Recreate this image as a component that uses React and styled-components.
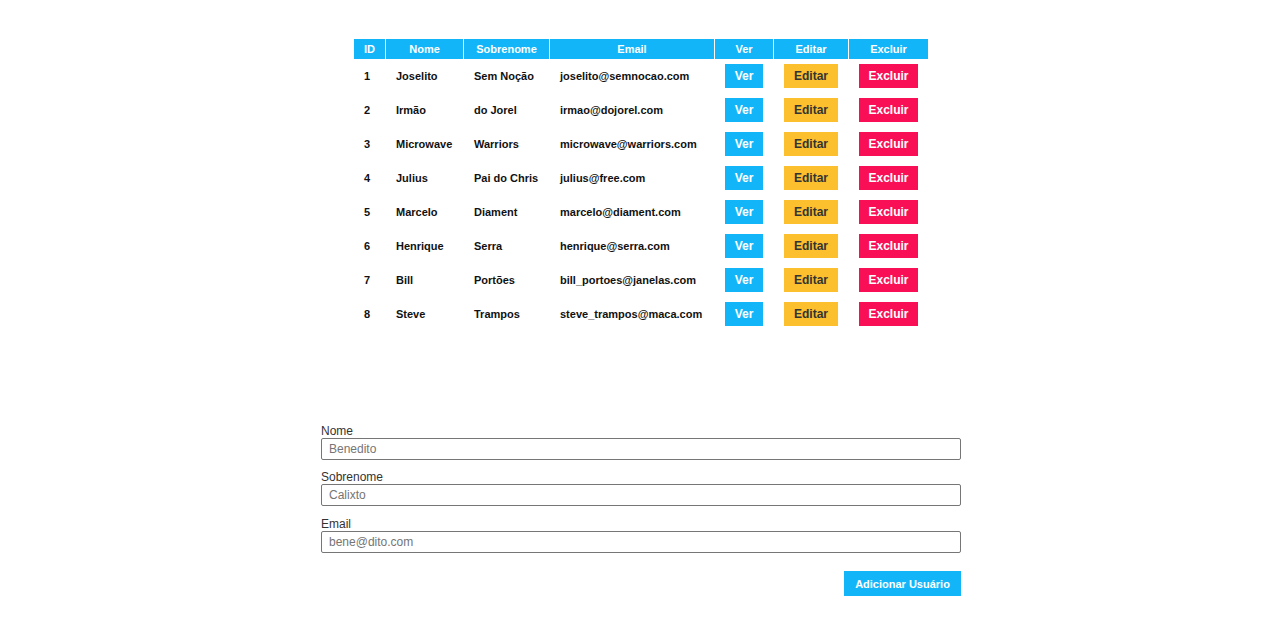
import React from "react";
import styled, { createGlobalStyle } from "styled-components";

const GlobalStyle = createGlobalStyle`
  html, body { margin: 0; padding: 0; background: #fff; }
  body { font-family: "Liberation Sans", Arial, sans-serif; }
`;

const BLUE = "#12b6f8";
const YELLOW = "#fcc02e";
const RED = "#f90f56";

const Page = styled.div`
  padding: 38px 0 0 2px;
  display: flex;
  flex-direction: column;
  align-items: center;
`;

const Table = styled.table`
  border-collapse: separate;
  border-spacing: 1px;
  font-family: "Liberation Sans", Arial, sans-serif;
  font-size: 11px;
  font-weight: bold;
`;

const Th = styled.th`
  background: ${BLUE};
  color: #fff;
  height: 20px;
  padding: 0 10px;
  min-width: ${(p) => p.$w}px;
  text-align: center;
  font-weight: bold;
  white-space: nowrap;
`;

const Td = styled.td`
  padding: 4px 10px 5px;
  color: #111;
  text-align: left;
  vertical-align: middle;
  white-space: nowrap;
`;

const ActionButton = styled.button`
  height: 24px;
  width: ${(p) => p.$w}px;
  border: none;
  border-radius: 0;
  padding: 0;
  font-family: "Liberation Sans", Arial, sans-serif;
  font-size: 12px;
  font-weight: bold;
  cursor: pointer;
  background: ${(p) => p.$bg};
  color: ${(p) => p.$fg};
  display: block;
`;

const Form = styled.form`
  width: 640px;
  margin-top: 92px;
  display: flex;
  flex-direction: column;
`;

const Field = styled.div`
  display: flex;
  flex-direction: column;
  margin-bottom: ${(p) => p.$mb}px;
`;

const Label = styled.label`
  font-size: 12px;
  line-height: 14px;
  color: #333;
`;

const Input = styled.input`
  box-sizing: border-box;
  width: 640px;
  height: 22px;
  border: 1px solid #767676;
  border-radius: 2px;
  padding: 0 7px;
  font-family: "Liberation Sans", Arial, sans-serif;
  font-size: 12px;
  color: #333;
  &::placeholder { color: #757575; }
`;

const SubmitRow = styled.div`
  display: flex;
  justify-content: flex-end;
  margin-top: 8px;
`;

const SubmitButton = styled.button`
  height: 25px;
  width: 117px;
  border: none;
  padding: 0;
  background: ${BLUE};
  color: #fff;
  font-family: "Liberation Sans", Arial, sans-serif;
  font-size: 11px;
  font-weight: bold;
  cursor: pointer;
`;

const users = [
  [1, "Joselito", "Sem Noção", "joselito@semnocao.com"],
  [2, "Irmão", "do Jorel", "irmao@dojorel.com"],
  [3, "Microwave", "Warriors", "microwave@warriors.com"],
  [4, "Julius", "Pai do Chris", "julius@free.com"],
  [5, "Marcelo", "Diament", "marcelo@diament.com"],
  [6, "Henrique", "Serra", "henrique@serra.com"],
  [7, "Bill", "Portões", "bill_portoes@janelas.com"],
  [8, "Steve", "Trampos", "steve_trampos@maca.com"],
];

export default function App() {
  return (
    <>
      <GlobalStyle />
      <Page>
        <Table>
          <thead>
            <tr>
              <Th $w={11}>ID</Th>
              <Th $w={57}>Nome</Th>
              <Th $w={65}>Sobrenome</Th>
              <Th $w={144}>Email</Th>
              <Th $w={38}>Ver</Th>
              <Th $w={54}>Editar</Th>
              <Th $w={59}>Excluir</Th>
            </tr>
          </thead>
          <tbody>
            {users.map(([id, nome, sob, email]) => (
              <tr key={id}>
                <Td>{id}</Td>
                <Td>{nome}</Td>
                <Td>{sob}</Td>
                <Td>{email}</Td>
                <Td>
                  <ActionButton type="button" $bg={BLUE} $fg="#fff" $w={38}>Ver</ActionButton>
                </Td>
                <Td>
                  <ActionButton type="button" $bg={YELLOW} $fg="#333" $w={54}>Editar</ActionButton>
                </Td>
                <Td>
                  <ActionButton type="button" $bg={RED} $fg="#fff" $w={59}>Excluir</ActionButton>
                </Td>
              </tr>
            ))}
          </tbody>
        </Table>
        <Form onSubmit={(e) => e.preventDefault()}>
          <Field $mb={10}>
            <Label htmlFor="nome">Nome</Label>
            <Input id="nome" placeholder="Benedito" />
          </Field>
          <Field $mb={11}>
            <Label htmlFor="sobrenome">Sobrenome</Label>
            <Input id="sobrenome" placeholder="Calixto" />
          </Field>
          <Field $mb={10}>
            <Label htmlFor="email">Email</Label>
            <Input id="email" placeholder="bene@dito.com" />
          </Field>
          <SubmitRow>
            <SubmitButton type="submit">Adicionar Usuário</SubmitButton>
          </SubmitRow>
        </Form>
      </Page>
    </>
  );
}
